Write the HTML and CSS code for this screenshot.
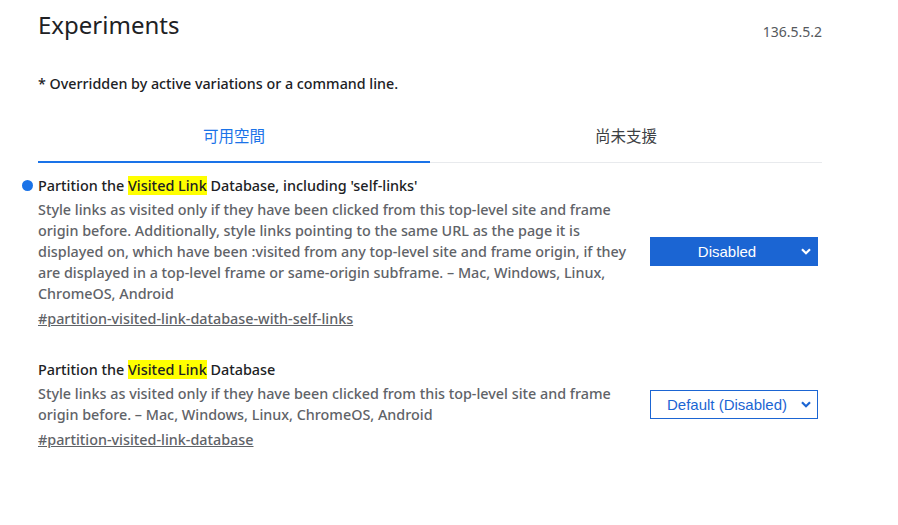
FILE: index.html
```html
<!DOCTYPE html>
<html>
<head>
<meta charset="utf-8">
<link rel="stylesheet" href="styles.css">
</head>
<body>
<div class="page">
  <header class="header">
    <h1 class="title">Experiments</h1>
    <span class="version">136.5.5.2</span>
  </header>
  <p class="note">* Overridden by active variations or a command line.</p>
  <nav class="tabs">
    <div class="tab tab-active">可用空間</div>
    <div class="tab">尚未支援</div>
  </nav>
  <section class="experiment">
    <div class="exp-text">
      <h2 class="exp-title"><span class="dot"></span>Partition the <mark class="hl">Visited Link</mark> Database, including 'self-links'</h2>
      <p class="exp-desc">Style links as visited only if they have been clicked from this top-level site and frame origin before. Additionally, style links pointing to the same URL as the page it is displayed on, which have been :visited from any top-level site and frame origin, if they are displayed in a top-level frame or same-origin subframe. – Mac, Windows, Linux, ChromeOS, Android</p>
      <a class="exp-link" href="#">#partition-visited-link-database-with-self-links</a>
    </div>
    <div class="exp-control">
      <div class="select select-on">Disabled<svg class="chev" width="10" height="7" viewBox="0 0 10 7"><path d="M1 1.2 L5 5.2 L9 1.2" fill="none" stroke="currentColor" stroke-width="2.2"/></svg></div>
    </div>
  </section>
  <section class="experiment exp-second">
    <div class="exp-text">
      <h2 class="exp-title">Partition the <mark class="hl">Visited Link</mark> Database</h2>
      <p class="exp-desc">Style links as visited only if they have been clicked from this top-level site and frame origin before. – Mac, Windows, Linux, ChromeOS, Android</p>
      <a class="exp-link" href="#">#partition-visited-link-database</a>
    </div>
    <div class="exp-control">
      <div class="select select-default">Default (Disabled)<svg class="chev" width="10" height="7" viewBox="0 0 10 7"><path d="M1 1.2 L5 5.2 L9 1.2" fill="none" stroke="currentColor" stroke-width="2.2"/></svg></div>
    </div>
  </section>
</div>
</body>
</html>
```
FILE: styles.css
```css
html, body {
  margin: 0;
  padding: 0;
  background: #fff;
}
body {
  font-family: "Noto Sans", "Noto Sans CJK TC", sans-serif;
  color: #202124;
}
.page {
  width: 784px;
  padding-left: 38px;
}
.header {
  display: flex;
  justify-content: space-between;
  align-items: flex-start;
  height: 50px;
}
.title {
  margin: 9px 0 0;
  font-size: 24px;
  font-weight: 400;
  line-height: 32px;
  color: #202124;
}
.version {
  margin-top: 22px;
  font-size: 14px;
  line-height: 20px;
  color: #55585c;
}
.note {
  margin: 24px 0 0;
  font-size: 14.3px;
  font-weight: 500;
  line-height: 20px;
}
.tabs {
  display: flex;
  margin-top: 16px;
  border-bottom: 1px solid #e8eaed;
}
.tab {
  flex: 1;
  text-align: center;
  font-family: "Noto Sans CJK TC", sans-serif;
  font-size: 15.5px;
  line-height: 20px;
  padding: 15px 0 16px;
  color: #3c4043;
  border-bottom: 2px solid transparent;
  margin-bottom: -1px;
}
.tab-active {
  color: #1a73e8;
  border-bottom-color: #1a73e8;
}
.experiment {
  display: flex;
  align-items: center;
  margin-top: 12px;
}
.exp-second {
  margin-top: 30px;
}
.exp-text {
  flex: 1;
  min-width: 0;
}
.exp-title {
  position: relative;
  margin: 0;
  font-size: 14.4px;
  font-weight: 500;
  line-height: 21px;
  color: #202124;
}
.dot {
  position: absolute;
  left: -16px;
  top: 5px;
  width: 11px;
  height: 11px;
  border-radius: 50%;
  background: #1a73e8;
}
.hl {
  background: #ffff00;
  color: #202124;
}
.exp-desc {
  margin: 3px 0 0;
  width: 600px;
  font-size: 14.35px;
  line-height: 21px;
  color: #5f6368;
  font-weight: 500;
}
.exp-link {
  display: inline-block;
  margin-top: 4px;
  font-size: 14.35px;
  line-height: 21px;
  color: #5f6368;
  font-weight: 500;
}
.exp-control {
  width: 168px;
  flex: none;
  margin-right: 4px;
}
.select {
  position: relative;
  box-sizing: border-box;
  height: 29px;
  width: 168px;
  font-family: "Liberation Sans", Arial, sans-serif;
  font-size: 15px;
  line-height: 27px;
  text-align: center;
  padding-right: 14px;
}
.select-on {
  background: #1b65d3;
  color: #fff;
  border: 1px solid #1b65d3;
  margin-bottom: 1px;
}
.select-default {
  background: #fff;
  color: #1b65d3;
  border: 1px solid #1b65d3;
}
.chev {
  position: absolute;
  right: 6px;
  top: 10px;
}
```
